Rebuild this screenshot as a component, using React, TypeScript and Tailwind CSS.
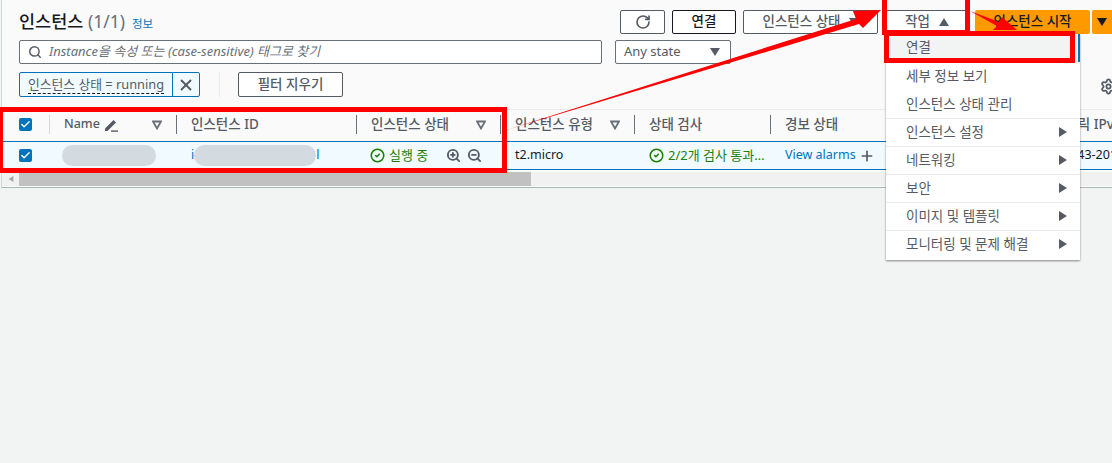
import { Check, RotateCw, Search, Settings, X, ZoomIn, ZoomOut, Plus, CircleCheck } from 'lucide-react';

const font = { fontFamily: '"Noto Sans", "Noto Sans CJK KR", sans-serif' };

function Caret({ dir = 'down', className = '' }: { dir?: 'down' | 'up' | 'right'; className?: string }) {
  const points = dir === 'down' ? '0,1 10,1 5,9' : dir === 'up' ? '0,9 10,9 5,1' : '1,0 9,5 1,10';
  return (
    <svg viewBox="0 0 10 10" className={`w-[10px] h-[10px] ${className}`}>
      <polygon points={points} fill="currentColor" />
    </svg>
  );
}

function SortIcon() {
  return (
    <svg viewBox="0 0 10 10" className="w-[10px] h-[10px] text-[#687078]">
      <polygon points="1,1.5 9,1.5 5,8.5" fill="none" stroke="currentColor" strokeWidth="1.8" />
    </svg>
  );
}

function PenIcon() {
  return (
    <svg viewBox="0 0 14 14" className="w-[14px] h-[14px] text-[#545b64]">
      <polygon points="1,10.5 9.5,2 12,4.5 3.5,13 1,13" fill="currentColor" />
      <rect x="7" y="12.4" width="7" height="1.4" fill="currentColor" />
    </svg>
  );
}

function Checkbox() {
  return (
    <div className="w-[13px] h-[13px] rounded-[2px] bg-[#0073bb] flex items-center justify-center">
      <Check className="w-[11px] h-[11px] text-white" strokeWidth={3} />
    </div>
  );
}

function HeaderCell({ width, label, sort }: { width: string; label: React.ReactNode; sort?: boolean }) {
  return (
    <div className={`${width} shrink-0 h-[19px] flex items-center justify-between pl-[14px] pr-[14px] border-r border-[#687078] font-medium text-[13.5px] text-[#545b64]`}>
      <div className="flex items-center gap-[4px] whitespace-nowrap">{label}</div>
      {sort && <SortIcon />}
    </div>
  );
}

function MenuItem({ label, arrow, line, active }: { label: string; arrow?: boolean; line?: boolean; active?: boolean }) {
  return (
    <div className={`h-[28px] flex items-center justify-between pl-[20px] pr-[12px] text-[13.5px] text-[#545b64] ${line ? 'border-t border-[#eaeded] pb-[1px]' : ''} ${active ? 'bg-[#f2f3f3] border-r-2 border-r-[#0073bb] pb-[2px]' : ''}`}>
      <span>{label}</span>
      {arrow && <Caret dir="right" className="text-[#545b64]" />}
    </div>
  );
}

export default function App() {
  return (
    <div style={font} className="relative w-[1112px] h-[463px] overflow-hidden bg-[#f2f3f3] text-[13px] text-[#16191f]">
      <div className="bg-[#fafafa] border-b border-[#aab7b8] h-[188px] ml-[1px] border-l border-l-[#d5dbdb]">
        {/* Toolbar */}
        <div className="flex items-center justify-between h-[33px] pt-[10px] pl-[17px]">
          <div className="flex items-baseline gap-[7px]">
            <span className="text-[17.5px] leading-[22px] font-medium text-[#16191f]">
              인스턴스 <span className="text-[#687078] font-normal">(1/1)</span>
            </span>
            <span className="text-[11.5px] text-[#0073bb]">정보</span>
          </div>
          <div className="flex items-center gap-[7px] text-[13.5px] font-medium">
            <button className="w-[45px] h-[24px] bg-white border border-[#545b64] rounded-[2px] flex items-center justify-center text-[#545b64]">
              <RotateCw className="w-[16px] h-[16px]" strokeWidth={2.5} />
            </button>
            <button className="w-[64px] h-[24px] bg-white border border-[#16191f] rounded-[2px]">연결</button>
            <button className="w-[135px] h-[24px] bg-white border border-[#545b64] rounded-[2px] text-[#545b64] flex items-center justify-center gap-[8px]">
              인스턴스 상태 <Caret />
            </button>
            <button className="w-[82px] h-[24px] ml-[1px] bg-white border border-[#545b64] rounded-[2px] text-[#545b64] flex items-center justify-center gap-[9px]">
              작업 <Caret dir="up" />
            </button>
            <button className="w-[115px] h-[24px] bg-[#ff9900] rounded-[2px]">인스턴스 시작</button>
            <button className="w-[20px] h-[24px] -ml-[5px] bg-[#ff9900] rounded-l-[2px] flex items-center justify-center">
              <Caret />
            </button>
          </div>
        </div>

        {/* Search */}
        <div className="flex items-center gap-[13px] pl-[17px] mt-[7px]">
          <div className="w-[583px] h-[24px] bg-white border border-[#687078] rounded-[2px] flex items-center gap-[7px] pl-[8px] italic text-[#687078]">
            <Search className="w-[14px] h-[14px] text-[#545b64]" strokeWidth={2.5} />
            <span className="text-[13px]">Instance을 속성 또는 (case-sensitive) 태그로 찾기</span>
          </div>
          <div className="w-[116px] h-[24px] bg-white border border-[#687078] rounded-[2px] flex items-center justify-between pl-[8px] pr-[10px] text-[#545b64]">
            <span>Any state</span>
            <Caret />
          </div>
        </div>

        {/* Filter chips */}
        <div className="flex items-center justify-between pl-[17px] mt-[8px] h-[25px]">
          <div className="flex items-center">
            <div className="flex w-[181px] h-[25px] bg-[#f1faff] border border-[#0073bb] rounded-[2px]">
              <div className="flex-1 flex items-center pl-[8px] border-r border-[#0073bb] whitespace-nowrap">
                <span className="text-[12.8px] leading-[17px] text-[#545b64] border-b border-dashed border-[#16191f]">인스턴스 상태 = running</span>
              </div>
              <div className="w-[26px] flex items-center justify-center">
                <X className="w-[18px] h-[18px] text-[#545b64]" strokeWidth={2.5} />
              </div>
            </div>
            <div className="w-px h-[25px] bg-[#eaeded] ml-[19px]" />
            <button className="w-[105px] h-[25px] ml-[18px] bg-white border border-[#545b64] rounded-[2px] text-[13.5px] font-medium text-[#545b64]">
              필터 지우기
            </button>
          </div>
          <div className="flex items-center gap-[20px] -mr-[5px] self-end -mb-[2px]">
            <div className="w-px h-[25px] bg-[#eaeded]" />
            <Settings className="w-[17px] h-[17px] text-[#545b64]" strokeWidth={2.5} />
          </div>
        </div>

        {/* Table */}
        <div className="mt-[12px] border-t border-[#eaeded] overflow-hidden">
          <div className="flex items-center h-[31px] pb-[2px]">
            <div className="w-[48px] h-[19px] shrink-0 pl-[17px] flex items-center border-r border-[#d5dbdb]">
              <Checkbox />
            </div>
            <HeaderCell width="w-[127px]" label={<><span className="text-[12.5px]">Name</span> <PenIcon /></>} sort />
            <HeaderCell width="w-[180px]" label="인스턴스 ID" />
            <HeaderCell width="w-[144px]" label="인스턴스 상태" sort />
            <HeaderCell width="w-[134px]" label="인스턴스 유형" sort />
            <HeaderCell width="w-[136px]" label="상태 검사" />
            <HeaderCell width="w-[250px]" label="경보 상태" />
            <span className="pl-[32px] font-medium text-[13.5px] text-[#545b64] whitespace-nowrap">퍼블릭 IPv4</span>
          </div>
          <div className="flex items-center h-[29px] bg-[#f1faff] border-y border-[#0073bb] whitespace-nowrap text-[12.5px]">
            <div className="w-[48px] shrink-0 pl-[17px] flex items-center">
              <Checkbox />
            </div>
            <div className="w-[127px] shrink-0 pl-[12px]">
              <div className="w-[94px] h-[21px] rounded-full bg-[#d3dbe1]" />
            </div>
            <div className="w-[180px] shrink-0 pl-[14px] flex items-center text-[#0073bb]">
              <span>i</span>
              <div className="w-[122px] h-[21px] rounded-full bg-[#d3dbe1]" />
              <span>l</span>
            </div>
            <div className="w-[144px] shrink-0 pl-[13px] flex items-center text-[#1d8102] text-[13px]">
              <CircleCheck className="w-[15px] h-[15px] mr-[4px]" strokeWidth={2.5} />
              <span className="w-[57px]">실행 중</span>
              <ZoomIn className="w-[15px] h-[15px] text-[#545b64]" strokeWidth={3} />
              <ZoomOut className="w-[15px] h-[15px] ml-[6px] text-[#545b64]" strokeWidth={3} />
            </div>
            <div className="w-[134px] shrink-0 pl-[14px]">t2.micro</div>
            <div className="w-[136px] shrink-0 pl-[14px] flex items-center text-[#1d8102] text-[13px]">
              <CircleCheck className="w-[15px] h-[15px] mr-[4px]" strokeWidth={2.5} />
              2/2개 검사 통과…
            </div>
            <div className="w-[250px] shrink-0 pl-[14px] flex items-center text-[#0073bb]">
              View alarms
              <Plus className="w-[16px] h-[16px] ml-[3px] text-[#545b64]" strokeWidth={2.5} />
            </div>
            <span className="pl-[32px]">ec2-43-201-1</span>
          </div>
        </div>

        {/* Scrollbar */}
        <div className="flex h-[14px] mt-[2px] bg-[#f1f1f1]">
          <div className="w-[17px] flex items-center justify-center text-[#a3a3a3]">
            <Caret dir="right" className="rotate-180 !w-[6px] !h-[6px]" />
          </div>
          <div className="w-[512px] bg-[#c1c1c1]" />
        </div>
      </div>

      {/* Actions menu */}
      <div className="absolute left-[886px] top-[34px] w-[194px] pb-[2px] bg-white shadow-[0_1px_2px_rgba(0,0,0,0.45)]">
        <MenuItem label="연결" active />
        <MenuItem label="세부 정보 보기" />
        <MenuItem label="인스턴스 상태 관리" />
        <MenuItem label="인스턴스 설정" arrow line />
        <MenuItem label="네트워킹" arrow line />
        <MenuItem label="보안" arrow line />
        <MenuItem label="이미지 및 템플릿" arrow line />
        <MenuItem label="모니터링 및 문제 해결" arrow line />
      </div>

      {/* Red annotation boxes */}
      <div className="absolute -left-[2px] top-[107px] w-[509px] h-[66px] border-[5px] border-[#ff0000]" />
      <div className="absolute left-[882px] -top-[5px] w-[88px] h-[40px] border-[5px] border-[#ff0000]" />
      <div className="absolute left-[884px] top-[31px] w-[191px] h-[32px] border-[5px] border-[#ff0000]" />

      {/* Red arrows */}
      <svg viewBox="0 0 1112 463" className="absolute inset-0 w-[1112px] h-[463px] pointer-events-none">
        <polygon points="503,131 856,19 853,11 881,10 863,28 859,24" fill="#ff0000" />
        <polygon points="970,11 999,22 1002,17 1017,30 993,30 997,26" fill="#ff0000" />
      </svg>
    </div>
  );
}
